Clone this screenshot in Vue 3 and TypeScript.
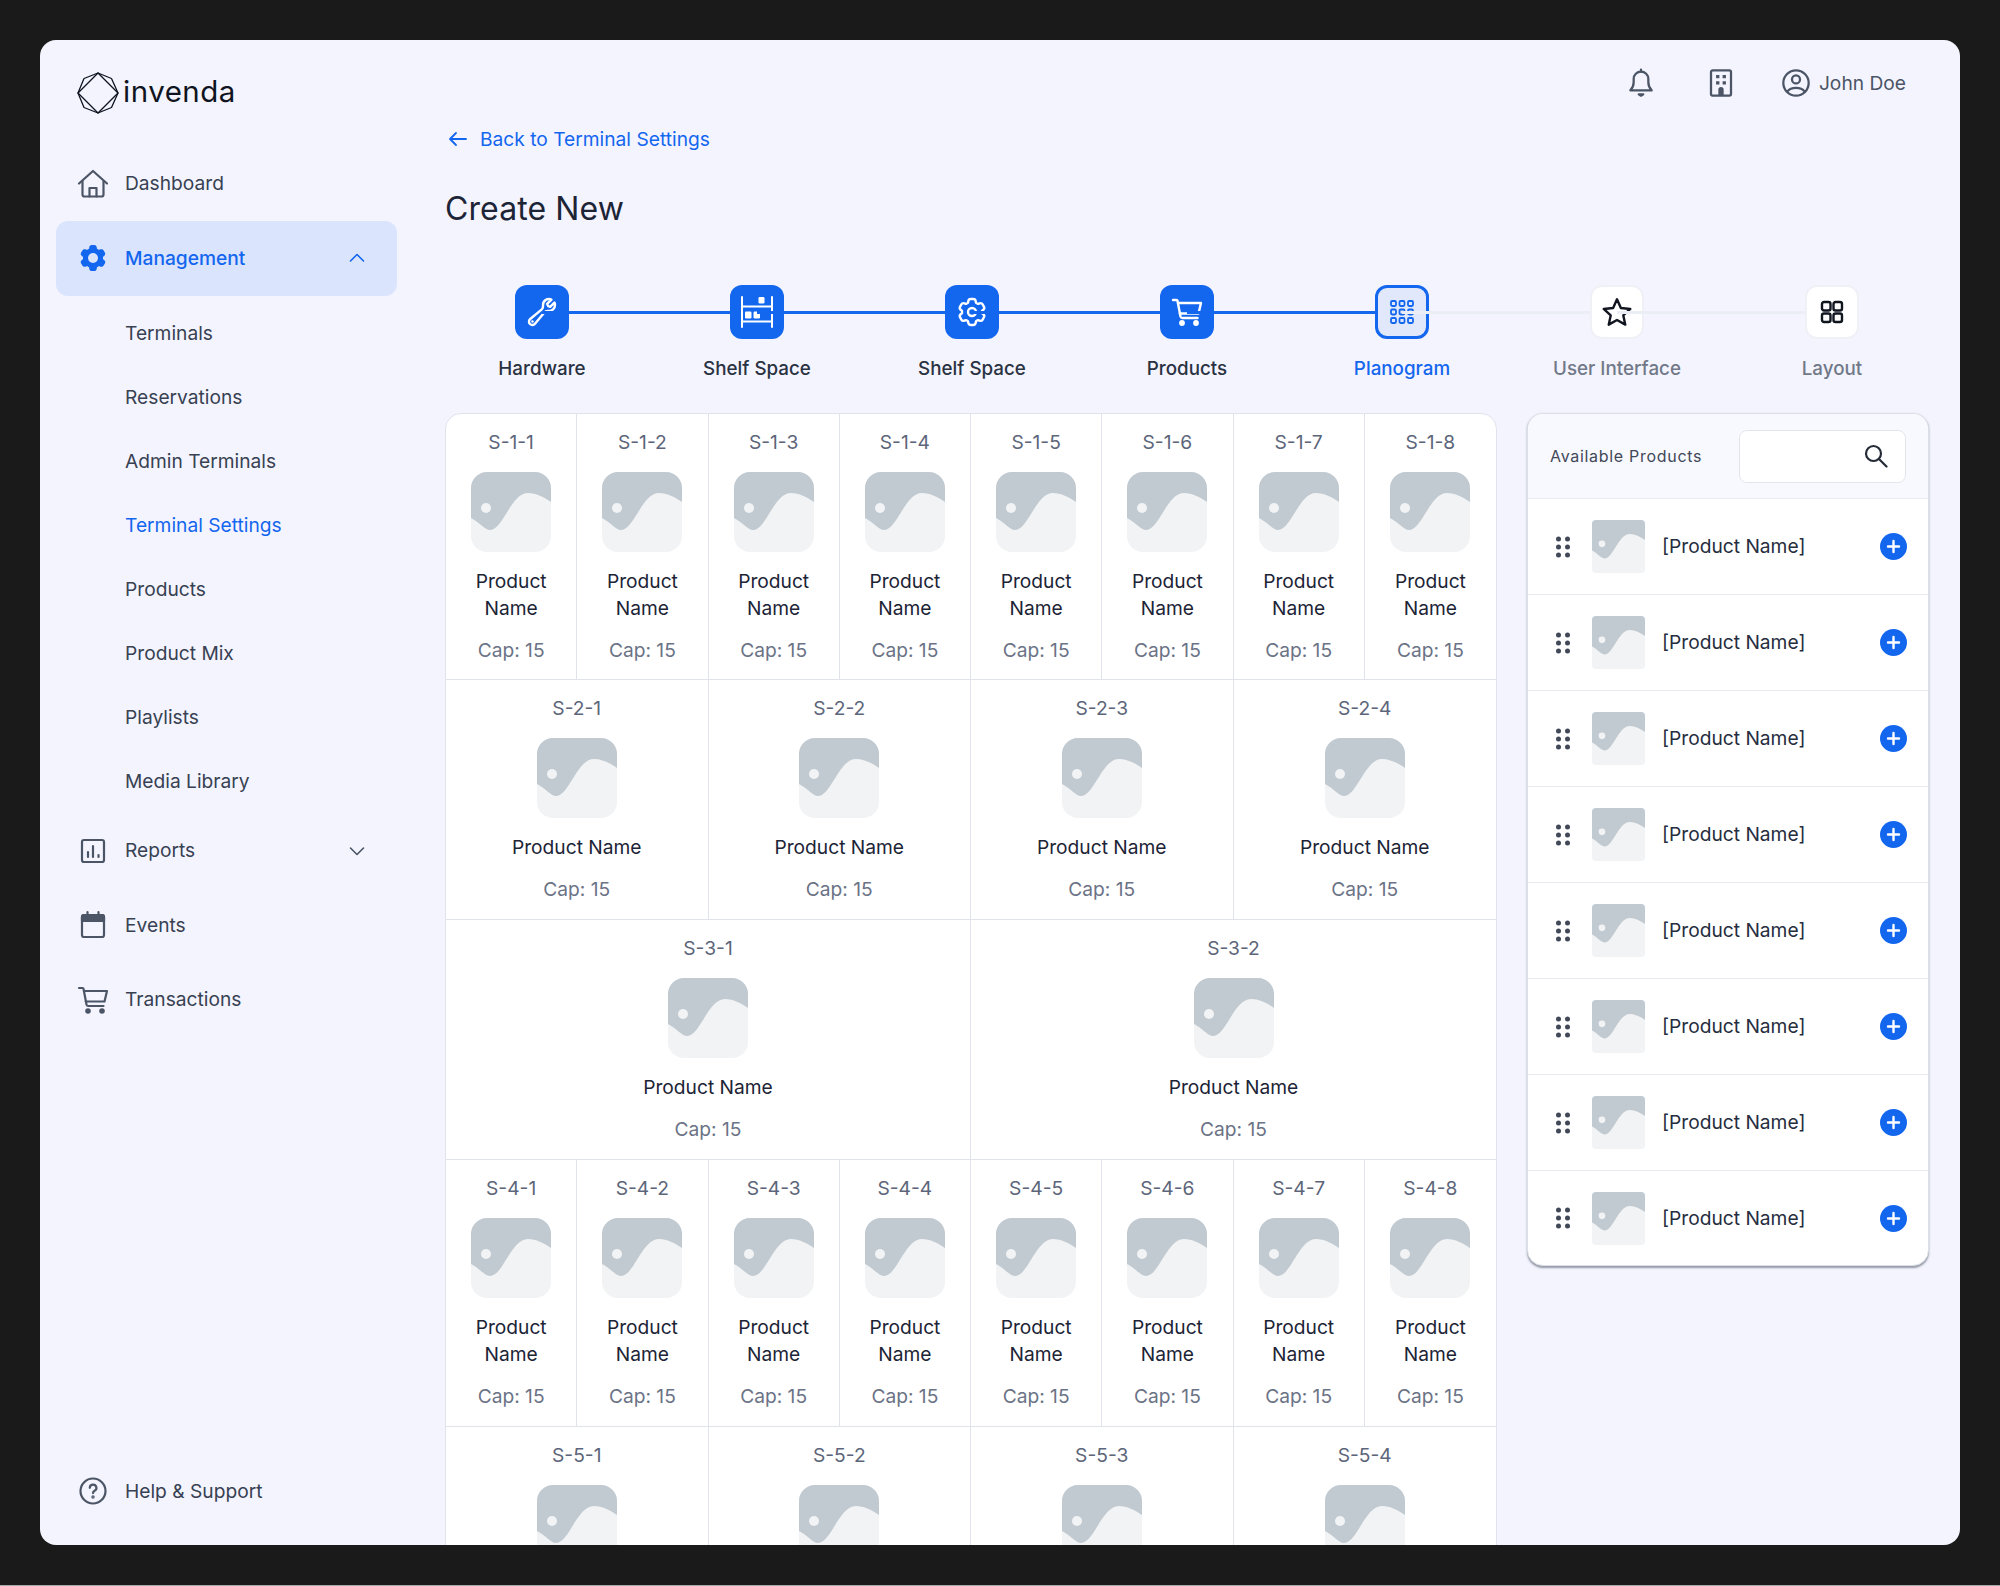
<script setup lang="ts">
interface Step {
  label: string;
  icon: string;
  state: 'done' | 'active' | 'todo';
}

const subItems: string[] = [
  'Terminals',
  'Reservations',
  'Admin Terminals',
  'Terminal Settings',
  'Products',
  'Product Mix',
  'Playlists',
  'Media Library',
];

const steps: Step[] = [
  { label: 'Hardware', icon: 'wrench', state: 'done' },
  { label: 'Shelf Space', icon: 'shelf', state: 'done' },
  { label: 'Shelf Space', icon: 'cog', state: 'done' },
  { label: 'Products', icon: 'cart', state: 'done' },
  { label: 'Planogram', icon: 'grid', state: 'active' },
  { label: 'User Interface', icon: 'star', state: 'todo' },
  { label: 'Layout', icon: 'layout', state: 'todo' },
];

const shelves: number[] = [8, 4, 2, 8, 4];
const products: number[] = [1, 2, 3, 4, 5, 6, 7, 8];

const cogPath =
  'M11.078 2.25c-.917 0-1.699.663-1.85 1.567L9.05 4.889c-.02.12-.115.26-.297.348a7.493 7.493 0 0 0-.986.57c-.166.115-.334.126-.45.083L6.3 5.508a1.875 1.875 0 0 0-2.282.819l-.922 1.597a1.875 1.875 0 0 0 .432 2.385l.84.692c.095.078.17.229.154.43a7.598 7.598 0 0 0 0 1.139c.015.2-.059.352-.153.43l-.841.692a1.875 1.875 0 0 0-.432 2.385l.922 1.597a1.875 1.875 0 0 0 2.282.818l1.019-.382c.115-.043.283-.031.45.082.312.214.641.405.985.57.182.088.277.228.297.35l.178 1.071c.151.904.933 1.567 1.85 1.567h1.844c.916 0 1.699-.663 1.85-1.567l.178-1.072c.02-.12.114-.26.297-.349.344-.165.673-.356.985-.57.167-.114.335-.125.45-.082l1.02.382a1.875 1.875 0 0 0 2.28-.819l.923-1.597a1.875 1.875 0 0 0-.432-2.385l-.84-.692c-.095-.078-.17-.229-.154-.43a7.614 7.614 0 0 0 0-1.139c-.016-.2.059-.352.153-.43l.84-.692c.708-.582.891-1.59.433-2.385l-.922-1.597a1.875 1.875 0 0 0-2.282-.818l-1.02.382c-.114.043-.282.031-.449-.083a7.49 7.49 0 0 0-.985-.57c-.183-.087-.277-.227-.297-.348l-.179-1.072a1.875 1.875 0 0 0-1.85-1.567h-1.843Z';
</script>

<template>
  <div class="screen">
    <div class="card">
      <aside class="sidebar">
        <div class="logo">
          <svg class="logo-mark" viewBox="0 0 42 42" fill="none" stroke="#0f1420" stroke-width="1.3" stroke-linejoin="round">
            <path d="M21 1 41 21 21 41 1 21Z" />
            <path d="M21 1 34.5 6.5 41 21 34.5 35.5 21 41 7 35.5 1 21 7 6.5Z" />
          </svg>
          <span class="logo-text">invenda</span>
        </div>

        <nav class="nav">
          <a class="nav-item">
            <svg class="nav-icon" viewBox="0 0 32 32" fill="none" stroke="#4b5565" stroke-width="2.2" stroke-linecap="round" stroke-linejoin="round">
              <path d="M2 15.500 16 3l14 12.500" />
              <path d="M5.500 13v13.500a2 2 0 0 0 2 2h17a2 2 0 0 0 2-2V13" />
              <path d="M12.500 28.500V20h7v8.500" />
            </svg>
            Dashboard
          </a>

          <a class="nav-item nav-item-active">
            <svg class="nav-icon" viewBox="0 0 24 24">
              <path :d="cogPath" fill="#1366ee" />
              <circle cx="12" cy="12" r="3.75" fill="#dae4fd" />
            </svg>
            Management
            <svg class="chevron" viewBox="0 0 16 16" fill="none" stroke="#1366ee" stroke-width="1.6" stroke-linecap="round" stroke-linejoin="round">
              <path d="M1.5 11 8 4.5l6.500 6.500" />
            </svg>
          </a>

          <div class="sub-list">
            <a
              v-for="item in subItems"
              :key="item"
              class="sub-item"
              :class="{ 'sub-item-active': item === 'Terminal Settings' }"
            >
              {{ item }}
            </a>
          </div>

          <a class="nav-item">
            <svg class="nav-icon" viewBox="0 0 32 32" fill="none" stroke="#4b5565" stroke-width="2.2" stroke-linecap="round" stroke-linejoin="round">
              <rect x="5" y="5" width="22" height="22" rx="2" />
              <path d="M11 17v5M16 11v11M21.500 20v2" />
            </svg>
            Reports
            <svg class="chevron" viewBox="0 0 16 16" fill="none" stroke="#4b5565" stroke-width="1.6" stroke-linecap="round" stroke-linejoin="round">
              <path d="M1.500 5 8 11.500 14.500 5" />
            </svg>
          </a>

          <a class="nav-item">
            <svg class="nav-icon" viewBox="0 0 32 32" fill="none" stroke="#4b5565" stroke-width="2.2" stroke-linecap="round" stroke-linejoin="round">
              <rect x="5" y="6" width="22" height="22" rx="2" />
              <path d="M5 8a2 2 0 0 1 2-2h18a2 2 0 0 1 2 2v4H5Z" fill="#4b5565" />
              <path d="M10.500 3v3M21.500 3v3" />
            </svg>
            Events
          </a>

          <a class="nav-item">
            <svg class="nav-icon" viewBox="0 0 32 32" fill="none" stroke="#4b5565" stroke-width="2.200" stroke-linecap="round" stroke-linejoin="round">
              <path d="M2 4h3.500a1 1 0 0 1 1 .8L9.500 20.500a2 2 0 0 0 2 1.500h15" />
              <path d="M7 7h23l-2.500 10.500H8.800" />
              <circle cx="11" cy="27" r="1.700" fill="#4b5565" />
              <circle cx="25" cy="27" r="1.700" fill="#4b5565" />
            </svg>
            Transactions
          </a>
        </nav>

        <a class="nav-item help">
          <svg class="nav-icon" viewBox="0 0 32 32" fill="none" stroke="#4b5565" stroke-width="2.200" stroke-linecap="round" stroke-linejoin="round">
            <circle cx="16" cy="16" r="12.500" />
            <path d="M12.800 12.800a3.300 3.300 0 1 1 4.800 3c-1 .6-1.600 1.100-1.600 2.300" />
            <circle cx="16" cy="22" r=".6" fill="#4b5565" />
          </svg>
          Help &amp; Support
        </a>
      </aside>

      <main class="main">
        <header class="topbar">
          <svg class="top-icon" viewBox="0 0 24 24" fill="none" stroke="#4b5565" stroke-width="1.700" stroke-linecap="round" stroke-linejoin="round">
            <path d="M12 2v1.500" />
            <path d="M4 17.500c1.500-1.500 2.500-3 2.500-6V9a5.500 5.500 0 0 1 11 0v2.500c0 3 1 4.500 2.500 6Z" />
            <path d="M10.300 20.500h3.400L12 21.500Z" fill="#4b5565" />
          </svg>
          <svg class="top-icon" viewBox="0 0 24 24" fill="none" stroke="#4b5565" stroke-width="1.700" stroke-linejoin="round">
            <rect x="4.500" y="2.500" width="15" height="19" rx="1.200" />
            <path d="M8.300 6h2.500v2.500H8.300zM13.200 6h2.500v2.500h-2.500zM8.300 10.700h2.500v2.500H8.300zM13.200 10.700h2.500v2.500h-2.500z" fill="#4b5565" stroke="none" />
            <path d="M10 21.500V17a2 2 0 0 1 4 0v4.500Z" fill="#4b5565" stroke="none" />
          </svg>
          <div class="user">
            <svg class="top-icon" viewBox="0 0 24 24" fill="none" stroke="#4b5565" stroke-width="1.700" stroke-linecap="round">
              <circle cx="12" cy="12" r="9.500" />
              <circle cx="12" cy="9.300" r="3" />
              <path d="M5.500 18.500c1.500-2 3.800-2.800 6.500-2.800s5 .8 6.500 2.800" />
            </svg>
            John Doe
          </div>
        </header>

        <a class="back">
          <svg class="back-icon" viewBox="0 0 20 20" fill="none" stroke="#1366ee" stroke-width="1.800" stroke-linecap="round" stroke-linejoin="round">
            <path d="M18 10H2.500M8 4 2 10l6 6" />
          </svg>
          Back to Terminal Settings
        </a>

        <h1 class="title">Create New</h1>

        <ol class="stepper">
          <li
            v-for="(step, i) in steps"
            :key="i"
            class="step"
            :class="[`step-${step.state}`, { 'step-first': i === 0 }]"
          >
            <div class="step-box">
              <svg v-if="step.icon === 'wrench'" class="step-icon" viewBox="0 0 24 24" fill="none" stroke="currentColor" stroke-width="1.800" stroke-linecap="round" stroke-linejoin="round">
                <path d="M21.750 6.750a4.500 4.500 0 0 1-4.884 4.484c-1.076-.091-2.264.071-2.950.904l-7.152 8.684a2.548 2.548 0 1 1-3.586-3.586l8.684-7.152c.833-.686.995-1.874.904-2.950a4.500 4.500 0 0 1 6.336-4.486l-3.276 3.276a3.004 3.004 0 0 0 2.250 2.250l3.276-3.276c.271.580.422 1.226.422 1.900Z" />
                <path d="M4.867 19.125h.008v.008h-.008v-.008Z" />
              </svg>
              <svg v-else-if="step.icon === 'shelf'" class="step-icon step-icon-wide" viewBox="0 0 34 32" fill="none" stroke="currentColor" stroke-width="2" stroke-linecap="round" stroke-linejoin="round">
                <path d="M2 1v30M32 1v30M2 10.500h30M2 25.500h30" />
                <rect x="18.500" y="1" width="6" height="6.500" rx="1.200" fill="currentColor" stroke="none" />
                <rect x="5" y="15.500" width="6.500" height="7" rx="1.200" fill="currentColor" stroke="none" />
                <rect x="13.500" y="15.500" width="6.500" height="7" rx="1.200" fill="currentColor" stroke="none" />
              </svg>
              <svg v-else-if="step.icon === 'cog'" class="step-icon" viewBox="0 0 24 24" fill="none" stroke="currentColor" stroke-width="1.800" stroke-linejoin="round">
                <path :d="cogPath" />
                <circle cx="12" cy="12" r="3" />
              </svg>
              <svg v-else-if="step.icon === 'cart'" class="step-icon" viewBox="0 0 32 32" fill="none" stroke="currentColor" stroke-width="2.400" stroke-linecap="round" stroke-linejoin="round">
                <path d="M2 4h3.500a1 1 0 0 1 1 .8L9.500 20.500a2 2 0 0 0 2 1.500h15" />
                <path d="M7 7h23l-2.500 10.500H8.800" />
                <circle cx="11" cy="27" r="1.700" fill="currentColor" />
                <circle cx="25" cy="27" r="1.700" fill="currentColor" />
              </svg>
              <svg v-else-if="step.icon === 'grid'" class="step-icon" viewBox="0 0 24 24" fill="none" stroke="currentColor" stroke-width="1.800">
                <template v-for="y in [1, 9.500, 18]" :key="y">
                  <rect v-for="x in [1, 9.500, 18]" :key="x" :x="x" :y="y" width="5" height="5" rx="1.200" />
                </template>
              </svg>
              <svg v-else-if="step.icon === 'star'" class="step-icon" viewBox="0 0 24 24" fill="none" stroke="currentColor" stroke-width="1.800" stroke-linejoin="round">
                <path d="M12 2.500 14.900 9l7.100.700-5.300 4.800 1.500 7L12 18l-6.200 3.500 1.500-7L2 9.700 9.100 9Z" />
              </svg>
              <svg v-else class="step-icon step-icon-small" viewBox="0 0 24 24" fill="none" stroke="currentColor" stroke-width="2.400" stroke-linejoin="round">
                <rect x="2" y="2" width="8.500" height="8.500" rx="2" />
                <rect x="13.500" y="2" width="8.500" height="8.500" rx="2" />
                <rect x="2" y="13.500" width="8.500" height="8.500" rx="2" />
                <rect x="13.500" y="13.500" width="8.500" height="8.500" rx="2" />
              </svg>
            </div>
            <span class="step-label">{{ step.label }}</span>
          </li>
        </ol>

        <div class="content">
          <section class="planogram">
            <div
              v-for="(cols, r) in shelves"
              :key="r"
              class="shelf"
              :style="{ gridTemplateColumns: `repeat(${cols}, 1fr)` }"
            >
              <div v-for="c in cols" :key="c" class="slot">
                <div class="slot-id">S-{{ r + 1 }}-{{ c }}</div>
                <svg class="thumb" viewBox="0 0 80 80">
                  <rect width="80" height="80" rx="16" fill="#f1f3f5" />
                  <path d="M0 46V16A16 16 0 0 1 16 0h48a16 16 0 0 1 16 16v14c-7-5-15-9-23-9-17 0-25 37-38 37-5 0-11-8-19-12Z" fill="#c2cad1" />
                  <circle cx="15" cy="36" r="5" fill="#f1f3f5" />
                </svg>
                <div class="slot-name">Product Name</div>
                <div class="slot-cap">Cap: 15</div>
              </div>
            </div>
          </section>

          <section class="available">
            <div class="available-head">
              <span class="available-title">Available Products</span>
              <div class="search">
                <svg class="search-icon" viewBox="0 0 24 24" fill="none" stroke="#252b37" stroke-width="2.200" stroke-linecap="round">
                  <circle cx="9.500" cy="9.500" r="7.500" />
                  <path d="m15 15 7.500 7.500" />
                </svg>
              </div>
            </div>
            <div v-for="p in products" :key="p" class="product">
              <svg class="drag" viewBox="0 0 14 22" fill="#414857">
                <circle cx="2.500" cy="3" r="2.500" />
                <circle cx="11.500" cy="3" r="2.500" />
                <circle cx="2.500" cy="11" r="2.500" />
                <circle cx="11.500" cy="11" r="2.500" />
                <circle cx="2.500" cy="19" r="2.500" />
                <circle cx="11.500" cy="19" r="2.500" />
              </svg>
              <svg class="product-thumb" viewBox="0 0 80 80">
                <rect width="80" height="80" rx="6" fill="#f1f3f5" />
                <path d="M0 46V6a6 6 0 0 1 6-6h68a6 6 0 0 1 6 6v24c-7-5-15-9-23-9-17 0-25 37-38 37-5 0-11-8-19-12Z" fill="#c2cad1" />
                <circle cx="15" cy="36" r="5" fill="#f1f3f5" />
              </svg>
              <span class="product-name">[Product Name]</span>
              <svg class="add" viewBox="0 0 27 27">
                <circle cx="13.500" cy="13.500" r="13.500" fill="#1366ee" />
                <path d="M13.500 8v11M8 13.500h11" stroke="#fff" stroke-width="2.400" stroke-linecap="round" />
              </svg>
            </div>
          </section>
        </div>
      </main>
    </div>
  </div>
</template>

<style>
html,
body {
  margin: 0;
  background: #1a1a1a;
}
</style>

<style scoped>
.screen {
  box-sizing: border-box;
  height: 1586px;
  padding: 40px 40px 0;
  border-bottom: 1px solid #a9a9a9;
  background: #1a1a1a;
  font-family: Inter, "Liberation Sans", sans-serif;
  font-size: 19.2px;
  line-height: 27px;
}

.card {
  display: flex;
  height: 1505px;
  border-radius: 16px;
  background: #f3f4fe;
  overflow: hidden;
}

.sidebar {
  flex: none;
  display: flex;
  flex-direction: column;
  box-sizing: border-box;
  width: 405px;
  padding: 32px 48px 0 16px;
}

.logo {
  display: flex;
  align-items: center;
  gap: 4px;
  height: 42px;
  margin-left: 21px;
}

.logo-mark {
  flex: none;
  width: 42px;
  height: 42px;
}

.logo-text {
  margin-top: -4px;
  font-size: 29.5px;
  line-height: 36px;
  letter-spacing: 0.5px;
  color: #0f1420;
}

.nav {
  margin-top: 32.5px;
}

.nav-item {
  display: flex;
  align-items: center;
  gap: 16px;
  box-sizing: border-box;
  height: 74.5px;
  padding-left: 21px;
  border-radius: 12px;
  color: #384152;
}

.nav-item-active {
  background: #dae4fd;
  color: #1366ee;
  font-weight: 500;
}

.nav-icon {
  flex: none;
  width: 32px;
  height: 32px;
}

.chevron {
  width: 16px;
  height: 16px;
  margin-left: auto;
  margin-right: 32px;
}

.sub-list {
  display: flex;
  flex-direction: column;
  padding-top: 6px;
}

.sub-item {
  display: flex;
  align-items: center;
  height: 64px;
  padding-left: 69px;
  color: #384152;
}

.sub-item-active {
  color: #1366ee;
}

.help {
  margin-top: auto;
  margin-bottom: 16.500px;
}

.main {
  flex: 1;
  min-width: 0;
  padding: 24px 31px 0 0;
}

.topbar {
  display: flex;
  justify-content: flex-end;
  align-items: center;
  gap: 48px;
  height: 38px;
  padding-right: 23px;
}

.top-icon {
  flex: none;
  width: 32px;
  height: 32px;
}

.user {
  display: flex;
  align-items: center;
  gap: 7px;
  margin-left: -5px;
  color: #4b5565;
}

.back {
  display: flex;
  align-items: center;
  gap: 12px;
  margin-top: 23.500px;
  padding-left: 3px;
  color: #1366ee;
}

.back-icon {
  width: 20px;
  height: 20px;
}

.title {
  margin: 36.500px 0 0;
  font-size: 32px;
  font-weight: 400;
  line-height: 40px;
  letter-spacing: 0.1px;
  color: #1c2436;
}

.stepper {
  display: flex;
  margin: 56px -10.5px 0;
  padding: 0;
  list-style: none;
}

.step {
  flex: 1;
  position: relative;
  display: flex;
  flex-direction: column;
  align-items: center;
  gap: 16px;
}

.step::before {
  content: "";
  position: absolute;
  top: 25.5px;
  right: 50%;
  width: 100%;
  height: 3px;
  background: #1366ee;
}

.step-first::before {
  display: none;
}

.step-todo::before {
  background: #eceef5;
}

.step-box {
  position: relative;
  display: flex;
  justify-content: center;
  align-items: center;
  box-sizing: border-box;
  width: 54px;
  height: 54px;
  border-radius: 12px;
}

.step-done .step-box {
  background: #1366ee;
  color: #fff;
}

.step-active .step-box {
  border: 3px solid #1366ee;
  background: #e1e8fb;
  color: #1366ee;
}

.step-todo .step-box {
  border: 2px solid #f0f1f7;
  background: #fff;
  color: #11151f;
}

.step-icon {
  width: 32px;
  height: 32px;
}

.step-active .step-icon {
  width: 24px;
  height: 24px;
}

.step-icon-wide {
  width: 36px;
}

.step-icon-small {
  width: 24px;
  height: 24px;
}

.step-label {
  font-size: 18.8px;
  font-weight: 500;
  color: #2a3242;
}

.step-active .step-label {
  color: #1366ee;
}

.step-todo .step-label {
  color: #717888;
}

.content {
  display: flex;
  align-items: flex-start;
  gap: 30px;
  margin-top: 31px;
}

.planogram {
  flex: none;
  box-sizing: border-box;
  width: 1052px;
  border: 1px solid #e1e3ec;
  border-radius: 16px 16px 0 0;
  background: #fff;
  overflow: hidden;
}

.shelf {
  display: grid;
  border-bottom: 1px solid #e1e3ec;
}

.slot {
  display: flex;
  flex-direction: column;
  align-items: center;
  padding: 15px 20px 16px;
  border-right: 1px solid #e1e3ec;
  text-align: center;
}

.slot:last-child {
  border-right: none;
}

.shelf:first-child .slot {
  padding-bottom: 15px;
}

.slot-id {
  color: #5c6579;
}

.thumb {
  flex: none;
  width: 80px;
  height: 80px;
  margin-top: 16px;
}

.slot-name {
  margin-top: 16px;
  color: #1c2436;
}

.slot-cap {
  margin-top: 15px;
  color: #6b7386;
}

.available {
  flex: none;
  box-sizing: border-box;
  width: 402px;
  border: 1px solid #dcdfe6;
  border-radius: 16px;
  background: #fff;
  box-shadow: 0 1.5px 2px rgba(70, 80, 95, 0.55);
  overflow: hidden;
}

.available-head {
  display: flex;
  justify-content: space-between;
  align-items: center;
  box-sizing: border-box;
  height: 85px;
  padding: 0 22px;
  border-bottom: 1px solid #e9ebf1;
  background: #f8f9ff;
}

.available-title {
  font-size: 16px;
  letter-spacing: 0.7px;
  color: #414857;
}

.search {
  display: flex;
  justify-content: flex-end;
  align-items: center;
  box-sizing: border-box;
  width: 167px;
  height: 53px;
  padding-right: 17px;
  border: 1px solid #e3e5ec;
  border-radius: 8px;
  background: #fff;
}

.search-icon {
  width: 24px;
  height: 24px;
}

.product {
  display: flex;
  align-items: center;
  box-sizing: border-box;
  height: 96px;
  padding: 0 21px 0 28px;
  border-bottom: 1px solid #e9ebf1;
}

.product:last-child {
  height: 94px;
  border-bottom: none;
}

.drag {
  flex: none;
  width: 14px;
  height: 22px;
}

.product-thumb {
  flex: none;
  width: 53px;
  height: 53px;
  margin-left: 22px;
}

.product-name {
  margin-left: 17px;
  color: #252d3e;
}

.add {
  flex: none;
  width: 27px;
  height: 27px;
  margin-left: auto;
}
</style>
